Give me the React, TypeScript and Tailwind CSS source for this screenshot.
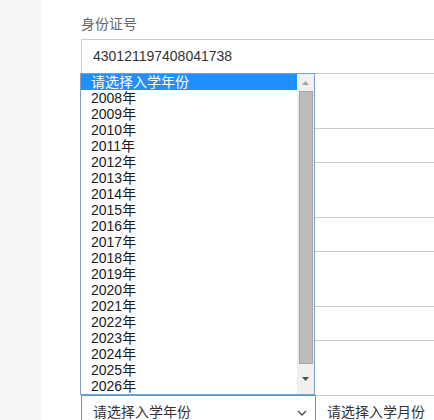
import React from "react";

const YEARS = Array.from({ length: 19 }, (_, i) => `${2008 + i}年`);

const FONT = { fontFamily: '"Liberation Sans", "Noto Sans CJK SC", sans-serif' };

// labels of the groups under the open list are covered, so only the first one shows
function Field({ label, children }: { label?: string; children: React.ReactNode }) {
  return (
    <div className="mb-[29px]">
      <div className="mb-[5px] h-[20px] text-[14px] leading-[20px] text-[#666]">{label}</div>
      {children}
    </div>
  );
}

function TextInput({ value = "" }: { value?: string }) {
  return (
    <div className="flex h-[35px] items-center border border-[#ccc] bg-white px-[11px] text-[14px] text-[#333]">
      {value}
    </div>
  );
}

function Chevron() {
  return (
    <svg width="10" height="6" viewBox="0 0 10 6" fill="none">
      <path d="M1 1l4 4 4-4" stroke="#444" strokeWidth="1.3" />
    </svg>
  );
}

function YearList() {
  return (
    <div className="absolute left-[80px] top-[73px] flex h-[322px] w-[235px] border border-[#7f9fc4] bg-white text-[14px] leading-[16px] text-[#1a1a1a]">
      <div className="flex-1">
        <div className="h-[16px] bg-[#1e90ff] pl-[10px] text-white">请选择入学年份</div>
        {YEARS.map((y) => (
          <div key={y} className="h-[16px] pl-[10px]">
            {y}
          </div>
        ))}
      </div>
      <div className="flex w-[17px] flex-col items-center bg-[#f0f0f0]">
        <div className="flex h-[17px] items-center justify-center">
          <svg width="7" height="4" viewBox="0 0 7 4">
            <path d="M0 4L3.5 0L7 4Z" fill="#a3a3a3" />
          </svg>
        </div>
        <div className="h-[273px] w-[14px] border border-[#a6a6a6] bg-[#bcbcbc]" />
        <div className="flex flex-1 items-center justify-center">
          <svg width="7" height="4" viewBox="0 0 7 4">
            <path d="M0 0L3.5 4L7 0Z" fill="#505050" />
          </svg>
        </div>
      </div>
    </div>
  );
}

export default function App() {
  return (
    <div className="relative flex h-[420px] w-[434px] overflow-hidden bg-white" style={FONT}>
      <div className="h-full w-[41px] shrink-0 bg-[#f5f7f6]" />
      <div className="w-[480px] shrink-0 pl-[40px] pt-[14px]">
        <Field label="身份证号">
          <TextInput value="430121197408041738" />
        </Field>
        <Field>
          <TextInput />
        </Field>
        <Field>
          <TextInput />
        </Field>
        <Field>
          <TextInput />
        </Field>
        <Field>
          <div className="flex">
            <div className="flex h-[35px] w-[235px] items-center justify-between border border-[#4d9de0] bg-white pl-[11px] pr-[8px] text-[14px] text-[#333]">
              <span>请选择入学年份</span>
              <Chevron />
            </div>
            <div className="flex h-[35px] flex-1 items-center border border-l-0 border-[#ccc] bg-white pl-[11px] text-[14px] text-[#333]">
              请选择入学月份
            </div>
          </div>
        </Field>
      </div>
      <YearList />
    </div>
  );
}
